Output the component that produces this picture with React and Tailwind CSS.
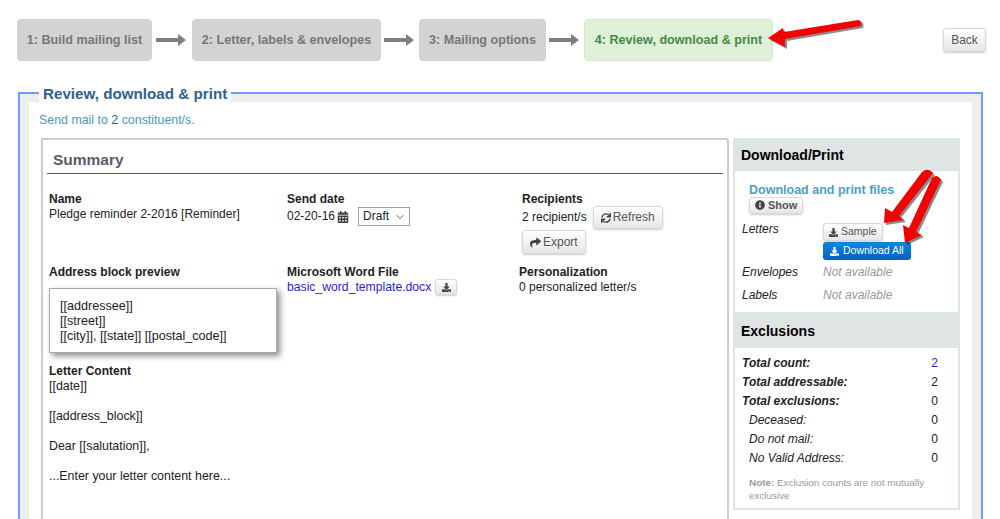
import React from 'react';
import { ChevronDown } from 'lucide-react';
import { FaCalendarAlt, FaDownload, FaInfoCircle, FaShare, FaSync } from 'react-icons/fa';

const btn = 'inline-flex items-center rounded-[3px] border border-[#d8d8d8] bg-gradient-to-b from-white to-[#e6e6e6] text-[#555] shadow-[0_1px_2px_rgba(0,0,0,0.2)]';

function StepArrow() {
  return (
    <svg width="31" height="14" viewBox="0 0 31 14" className="shrink-0">
      <path d="M0 5h22V1l8 6-8 6V9H0z" fill="#7f7f7f" />
    </svg>
  );
}

function Step({ active, className, children }) {
  const look = active
    ? 'border-[#d6e9c6] bg-[#dff0d8] text-[#468847]'
    : 'border-[#d0d0d0] bg-[#d3d3d3] text-[#777]';
  return (
    <div className={`flex h-[42px] shrink-0 items-center justify-center whitespace-nowrap rounded-[4px] border text-[12.6px] font-bold ${look} ${className}`}>
      {children}
    </div>
  );
}

// hand-drawn red annotation arrows from the screenshot
function RedArrow({ d, className, width, height, box }) {
  return (
    <svg width={width} height={height} viewBox={box} className={className}>
      <path d={d} fill="#000" opacity="0.45" transform="translate(2 2)" />
      <path d={d} fill="#f40000" />
    </svg>
  );
}

const EXCLUSIONS = [
  { label: 'Total count:', value: '2', bold: true, link: true },
  { label: 'Total addressable:', value: '2', bold: true },
  { label: 'Total exclusions:', value: '0', bold: true },
  { label: 'Deceased:', value: '0' },
  { label: 'Do not mail:', value: '0' },
  { label: 'No Valid Address:', value: '0' },
];

export default function App() {
  return (
    <div className="relative h-[519px] w-[1000px] overflow-hidden bg-white pt-[19px] font-['Liberation_Sans',Arial,sans-serif] text-[12px] text-[#222]">
      {/* wizard steps */}
      <div className="flex h-[42px] items-center pl-[17px]">
        <Step className="w-[135px]">1: Build mailing list</Step>
        <div className="ml-[4px] mr-[5px]"><StepArrow /></div>
        <Step className="w-[189px]">2: Letter, labels &amp; envelopes</Step>
        <div className="ml-[3px] mr-[4px]"><StepArrow /></div>
        <Step className="w-[127px]">3: Mailing options</Step>
        <div className="ml-[3px] mr-[4px]"><StepArrow /></div>
        <Step active className="w-[189px]">4: Review, download &amp; print</Step>
        <button className={`${btn} ml-[170px] h-[24px] w-[43px] justify-center text-[12px] text-[#444]`}>Back</button>
      </div>

      {/* main fieldset */}
      <div className="relative ml-[18px] mt-[31px] h-[500px] w-[965px] border-2 border-[#6f9bff] bg-[#eee] px-[9px] pt-[8px]">
        <div className="absolute left-[19px] top-[-9px] bg-white px-[4px] text-[15.2px] font-bold leading-[18px] text-[#2f6093]">
          Review, download &amp; print
        </div>
        <div className="h-full bg-white pl-[12px]">
          <div className="-ml-[2px] pt-[11px] text-[12.4px] leading-[14px] text-[#4b97bf]">
            Send mail to <span className="text-[#2f6093]">2</span> constituent/s.
          </div>
          <div className="mt-[11px] flex items-start">
            {/* summary panel */}
            <div className="h-[420px] w-[688px] rounded-tr-[3px] border-2 border-[#ccc] bg-white px-[4px]">
              <div className="border-b border-[#5c5670] pb-[4px] pl-[6px] pt-[10px] text-[15.5px] font-bold leading-[19px] text-[#5a5a68]">
                Summary
              </div>
              <div className="grid grid-cols-[238px_232px_1fr] grid-rows-[73px_auto] pl-[2px] pt-[18px] leading-[15px]">
                <div>
                  <div className="font-bold">Name</div>
                  <div>Pledge reminder 2-2016 [Reminder]</div>
                </div>
                <div>
                  <div className="font-bold">Send date</div>
                  <div className="flex items-center">
                    <span>02-20-16</span>
                    <FaCalendarAlt className="ml-[2px] h-[12px] w-[12px] text-[#444]" />
                    <div className="ml-[9px] flex h-[19px] w-[52px] items-center justify-between border border-[#a0a0a0] bg-white pl-[4px] pr-[3px]">
                      Draft
                      <ChevronDown className="h-[12px] w-[12px] text-[#666]" />
                    </div>
                  </div>
                </div>
                <div className="pl-[3px]">
                  <div className="font-bold">Recipients</div>
                  <div className="-mt-[1px] flex items-center">
                    <span>2 recipient/s</span>
                    <button className={`${btn} ml-[6px] h-[23px] px-[7px]`}>
                      <FaSync className="mr-[2px] h-[10px] w-[10px] text-[#444]" />Refresh
                    </button>
                  </div>
                  <button className={`${btn} mt-[1px] h-[24px] px-[7px]`}>
                    <FaShare className="mr-[2px] h-[11px] w-[11px] text-[#444]" />Export
                  </button>
                </div>
                <div>
                  <div className="font-bold">Address block preview</div>
                  <div className="mt-[8px] h-[65px] w-[228px] border border-[#aaa] px-[10px] pt-[10px] text-[12.6px] shadow-[3px_3px_6px_rgba(0,0,0,0.45)]">
                    <div>[[addressee]]</div>
                    <div>[[street]]</div>
                    <div>[[city]], [[state]] [[postal_code]]</div>
                  </div>
                  <div className="mt-[11px] font-bold">Letter Content</div>
                  <div className="text-[12.4px]">
                    <div>[[date]]</div>
                    <div className="mt-[15px]">[[address_block]]</div>
                    <div className="mt-[15px]">Dear [[salutation]],</div>
                    <div className="mt-[15px]">...Enter your letter content here...</div>
                  </div>
                </div>
                <div>
                  <div className="font-bold">Microsoft Word File</div>
                  <div className="-mt-[1px] flex items-center">
                    <span className="text-[12.2px] text-[#2a1fd0]">basic_word_template.docx</span>
                    <button className={`${btn} ml-[4px] h-[16px] w-[22px] justify-center`}>
                      <FaDownload className="h-[9px] w-[9px] text-[#444]" />
                    </button>
                  </div>
                </div>
                <div>
                  <div className="font-bold">Personalization</div>
                  <div>0 personalized letter/s</div>
                </div>
              </div>
            </div>

            {/* download side panel */}
            <div className="ml-[4px] w-[227px] border-2 border-t-0 border-[#dfe4e4] bg-white">
              <div className="h-[33px] bg-[#dfe4e4] pl-[6px] pt-[1px] text-[14px] font-bold leading-[33px] text-black">Download/Print</div>
              <div className="h-[141px] pl-[14px] pt-[12px]">
                <div className="text-[12.5px] font-bold leading-[14px] text-[#4f9ec6]">Download and print files</div>
                <button className={`${btn} -mt-[2px] h-[17px] px-[5px] text-[11px] font-bold`}>
                  <FaInfoCircle className="mr-[3px] h-[10px] w-[10px] text-[#444]" />Show
                </button>
                <div className="-ml-[7px] mt-[8px] flex">
                  <div className="w-[81px] italic leading-[12px]">Letters</div>
                  <div className="flex flex-col items-start">
                    <button className={`${btn} h-[18px] px-[5px] text-[10.5px]`}>
                      <FaDownload className="mr-[3px] h-[9px] w-[9px] text-[#444]" />Sample
                    </button>
                    <button className="mt-[1px] inline-flex h-[18px] items-center rounded-[3px] bg-gradient-to-b from-[#0a88dd] to-[#0560c4] px-[7px] text-[10.5px] text-white">
                      <FaDownload className="mr-[4px] h-[9px] w-[9px]" />Download All
                    </button>
                  </div>
                </div>
                <div className="-ml-[7px] mt-[4px] flex leading-[16px]">
                  <div className="w-[81px] italic">Envelopes</div>
                  <div className="italic text-[#999]">Not available</div>
                </div>
                <div className="-ml-[7px] mt-[7px] flex leading-[16px]">
                  <div className="w-[81px] italic">Labels</div>
                  <div className="italic text-[#999]">Not available</div>
                </div>
              </div>
              <div className="h-[36px] bg-[#dfe4e4] pl-[6px] pt-[1px] text-[14px] font-bold leading-[36px] text-black">Exclusions</div>
              <div className="px-[7px] pb-[6px] pt-[5px]">
                {EXCLUSIONS.map((row) => (
                  <div key={row.label} className="flex h-[19px] items-center justify-between pr-[13px]">
                    <span className={row.bold ? 'font-bold italic' : 'pl-[7px] italic'}>{row.label}</span>
                    <span className={row.link ? 'text-[#2a1fd0]' : ''}>{row.value}</span>
                  </div>
                ))}
                <div className="mt-[9px] pl-[7px] pr-[20px] text-[9.9px] leading-[13px] text-[#999]">
                  <span className="font-bold">Note:</span> Exclusion counts are not mutually exclusive
                </div>
              </div>
            </div>
          </div>
        </div>
      </div>

      {/* annotation arrows */}
      <RedArrow
        className="absolute left-[766px] top-[17px]"
        width="100" height="34" box="0 0 100 34"
        d="M2 21 L17 11 L18 15 L92 3 Q97 4 95 9 L19 22 L19 30 Z"
      />
      <RedArrow
        className="absolute left-[880px] top-[166px]"
        width="56" height="62" box="0 0 56 62"
        d="M4 57 L5 42 L12 46 L42 6 Q48 1 53 7 L19 50 L24 54 Z"
      />
      <RedArrow
        className="absolute left-[900px] top-[172px]"
        width="50" height="76" box="0 0 50 76"
        d="M5 71 L3 53 L9 56 L32 6 Q37 1 41 8 L16 60 L22 63 Z"
      />
    </div>
  );
}
